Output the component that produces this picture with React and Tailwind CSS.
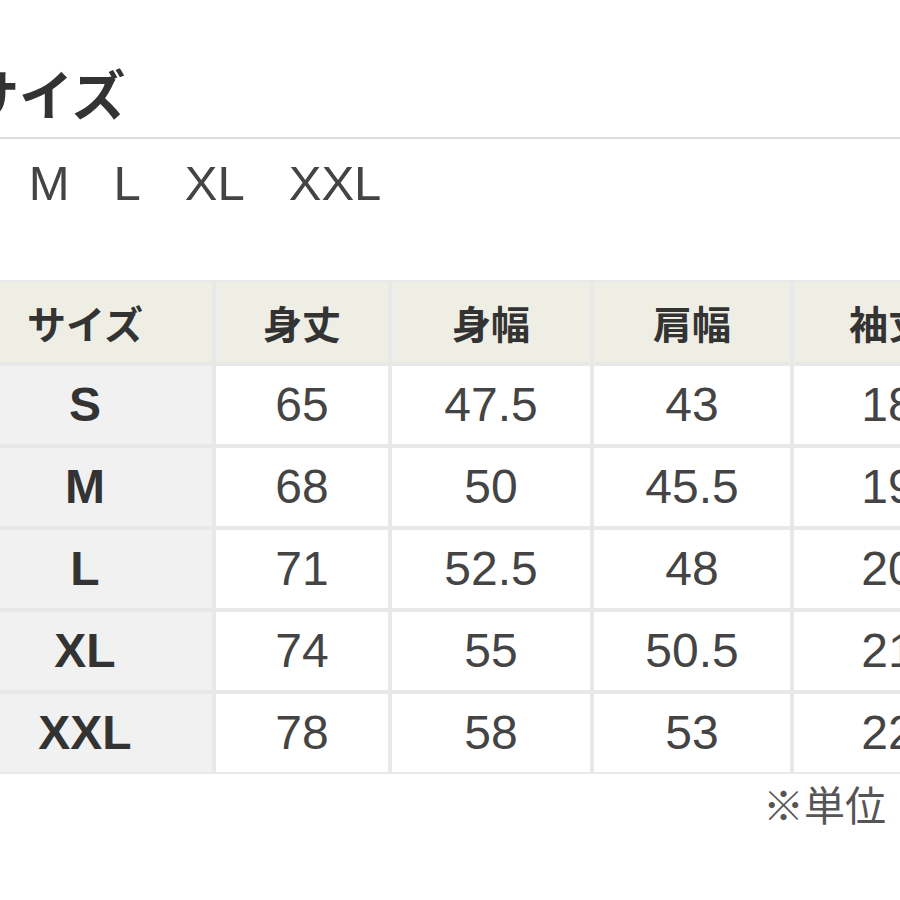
import React from "react";

const rows = [
  ["S", "65", "47.5", "43", "18"],
  ["M", "68", "50", "45.5", "19"],
  ["L", "71", "52.5", "48", "20"],
  ["XL", "74", "55", "50.5", "21"],
  ["XXL", "78", "58", "53", "22"],
];

const headers = ["サイズ", "身丈", "身幅", "肩幅", "袖丈"];

export default function App() {
  return (
    <div
      className="w-[900px] h-[900px] overflow-hidden bg-white flex flex-col"
      style={{ fontFamily: '"Liberation Sans", "Noto Sans CJK JP", sans-serif' }}
    >
      <div
        className="mt-[66px] ml-[-35px] text-[54px] leading-[54px] font-bold text-[#333] whitespace-nowrap"
        style={{ fontFamily: '"Noto Sans CJK JP", sans-serif' }}
      >
        サイズ
      </div>
      <div className="mt-[17px] h-[2px] w-[900px] bg-[#dcdcdc]" />
      <div className="mt-[20px] ml-[-48px] flex gap-[44px] text-[49px] leading-[49px] text-[#444] whitespace-nowrap">
        <span>S</span>
        <span>M</span>
        <span>L</span>
        <span>XL</span>
        <span>XXL</span>
      </div>
      <div className="mt-[72px] ml-[-44px] self-start">
        <div className="grid grid-cols-[254px_172px_198px_196px_188px] gap-[4px] bg-[#e8e8e8] p-[2px]">
          {headers.map((h) => (
            <div
              key={h}
              className="h-[80px] bg-[#efeee5] flex items-center justify-center text-[39px] font-bold text-[#333] whitespace-nowrap"
              style={{ fontFamily: '"Noto Sans CJK JP", sans-serif' }}
            >
              {h}
            </div>
          ))}
          {rows.map((r) =>
            r.map((c, i) =>
              i === 0 ? (
                <div
                  key={r[0] + i}
                  className="h-[78px] bg-[#f1f1f1] flex items-center justify-center text-[48px] font-bold text-[#333]"
                >
                  {c}
                </div>
              ) : (
                <div
                  key={r[0] + i}
                  className="h-[78px] bg-white flex items-center justify-center text-[48px] text-[#444]"
                >
                  {c}
                </div>
              )
            )
          )}
        </div>
      </div>
      <div
        className="mt-[9px] ml-[763px] text-[41px] leading-[41px] text-[#555] whitespace-nowrap"
        style={{ fontFamily: '"Noto Sans CJK JP", sans-serif' }}
      >
        ※単位：cm
      </div>
    </div>
  );
}
